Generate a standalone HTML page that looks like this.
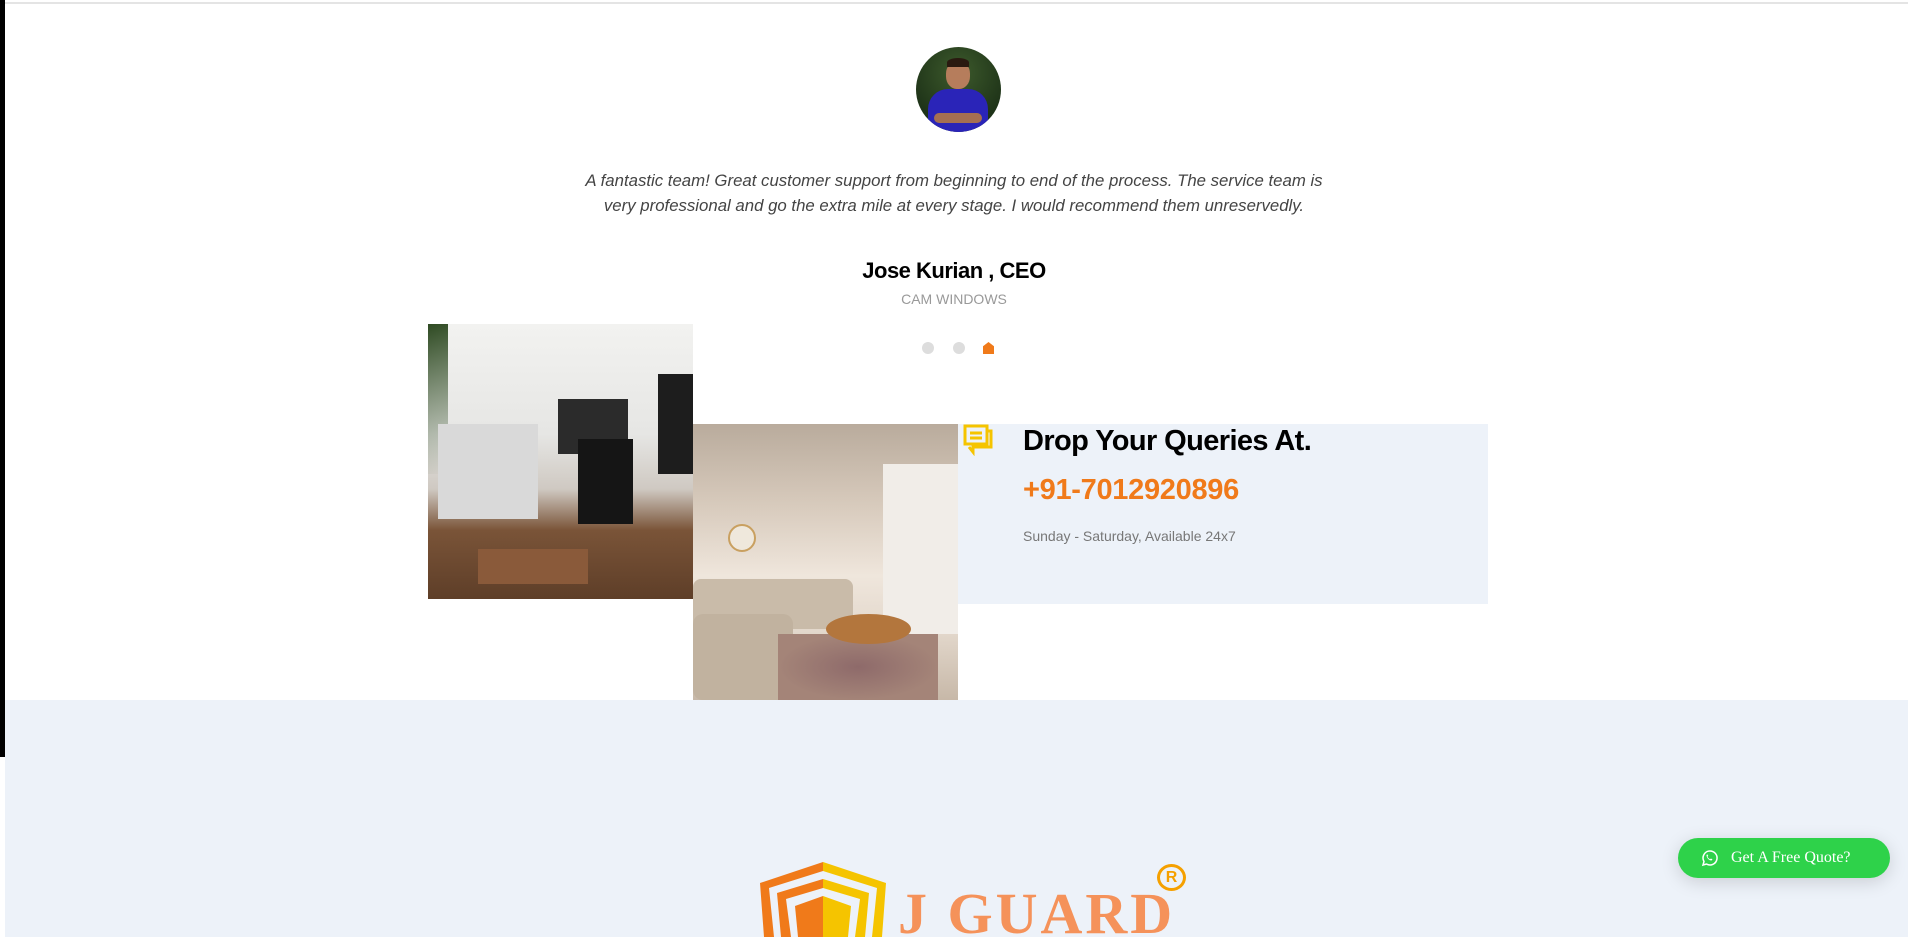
<!DOCTYPE html>
<html><head><meta charset="utf-8"><style>
*{margin:0;padding:0;box-sizing:border-box}
body{width:1908px;height:937px;overflow:hidden;background:#fff;font-family:"Liberation Sans",sans-serif;position:relative}
.a{position:absolute}
</style></head><body>
<div class="a" style="left:0;top:0;width:5px;height:757px;background:#000;z-index:5"></div>
<div class="a" style="left:5px;top:2px;width:1903px;height:2px;background:#e4e4e4"></div>
<!-- avatar -->
<div class="a" style="left:916px;top:47px;width:85px;height:85px;border-radius:50%;overflow:hidden;background:radial-gradient(circle at 50% 30%,#3d5a2c,#1e3318 70%)">
<div class="a" style="left:30px;top:14px;width:24px;height:28px;border-radius:45%;background:#b67d5c"></div>
<div class="a" style="left:31px;top:11px;width:22px;height:9px;border-radius:50% 50% 0 0;background:#2a1a10"></div>
<div class="a" style="left:12px;top:42px;width:60px;height:50px;border-radius:20px 20px 0 0;background:#2a24b8"></div>
<div class="a" style="left:18px;top:66px;width:48px;height:10px;border-radius:5px;background:#a56f52"></div>
</div>
<div class="a" style="left:0;width:1908px;top:168px;text-align:center;font-style:italic;font-size:16.8px;line-height:25px;color:#444">A fantastic team! Great customer support from beginning to end of the process. The service team is<br>very professional and go the extra mile at every stage. I would recommend them unreservedly.</div>
<div class="a" style="left:0;width:1908px;top:258px;text-align:center;font-weight:bold;font-size:22px;color:#000;letter-spacing:-0.5px">Jose Kurian , CEO</div>
<div class="a" style="left:0;width:1908px;top:291px;text-align:center;font-size:14px;color:#999">CAM WINDOWS</div>
<div class="a" style="left:922px;top:342px;width:12px;height:12px;border-radius:50%;background:#ddd"></div>
<div class="a" style="left:953px;top:342px;width:12px;height:12px;border-radius:50%;background:#ddd"></div>
<div class="a" style="left:983px;top:342px;width:11px;height:12px;background:#f07a1a;clip-path:polygon(50% 0,100% 35%,100% 100%,0 100%,0 35%)"></div>
<!-- office image -->
<div class="a" style="left:428px;top:324px;width:265px;height:275px;overflow:hidden;background:linear-gradient(180deg,#f2f2f0 0%,#e6e6e4 40%,#cfc9c2 60%,#7a5438 75%,#5e3e28 100%)">
<div class="a" style="left:0;top:0;width:20px;height:150px;background:linear-gradient(160deg,#2e4a22,transparent)"></div>
<div class="a" style="left:10px;top:100px;width:100px;height:95px;background:#d9d9d9"></div>
<div class="a" style="left:130px;top:75px;width:70px;height:55px;background:#2b2b2b"></div>
<div class="a" style="left:150px;top:115px;width:55px;height:85px;background:#151515"></div>
<div class="a" style="left:230px;top:50px;width:35px;height:100px;background:#1d1d1d"></div>
<div class="a" style="left:50px;top:225px;width:110px;height:35px;background:#8a5a3a"></div>
</div>
<!-- living room image -->
<div class="a" style="left:693px;top:424px;width:265px;height:276px;overflow:hidden;background:linear-gradient(180deg,#b9ab9c 0%,#d8cbbd 30%,#efe6dc 55%,#e3d8cc 75%,#c7b8a8 100%)">
<div class="a" style="left:190px;top:40px;width:75px;height:170px;background:#f1ede8"></div>
<div class="a" style="left:0;top:155px;width:160px;height:50px;border-radius:8px;background:#c9bba9"></div>
<div class="a" style="left:0;top:190px;width:100px;height:86px;border-radius:10px;background:#c1b29f"></div>
<div class="a" style="left:85px;top:210px;width:160px;height:66px;background:radial-gradient(ellipse,#8e6a6a,#a48478 70%)"></div>
<div class="a" style="left:133px;top:190px;width:85px;height:30px;border-radius:50%;background:#b3763d"></div>
<div class="a" style="left:35px;top:100px;width:28px;height:28px;border-radius:50%;border:2px solid #c9a060;background:#efe8dc"></div>
</div>
<!-- panel -->
<div class="a" style="left:958px;top:424px;width:530px;height:180px;background:#edf2f9"></div>
<svg class="a" style="left:963px;top:424px" width="32" height="32" viewBox="0 0 32 32" fill="none" stroke="#f5c400" stroke-width="3"><rect x="2" y="2" width="22" height="18"/><path d="M24 7h4v16H10v5l-4-5"/><path d="M7 9h12M7 14h12"/></svg>
<div class="a" style="left:1023px;top:425px;font-weight:bold;font-size:29px;color:#000;letter-spacing:-0.6px">Drop Your Queries At.</div>
<div class="a" style="left:1023px;top:474px;font-weight:bold;font-size:29px;color:#f07a1a;letter-spacing:-0.3px">+91-7012920896</div>
<div class="a" style="left:1023px;top:528px;font-size:14px;color:#777">Sunday - Saturday, Available 24x7</div>
<!-- bottom section -->
<div class="a" style="left:5px;top:700px;width:1903px;height:237px;background:#edf2f9"></div>
<svg class="a" style="left:760px;top:862px" width="126" height="75" viewBox="0 0 126 75"><path d="M63 0L0 21l4 54h10L9 26 63 9z" fill="#f07a1a"/><path d="M63 0l63 21-4 54h-10l5-49L63 9z" fill="#f5c400"/><path d="M63 17L17 31l4 44h10L26 37l37-11z" fill="#f07a1a"/><path d="M63 17l46 14-4 44h-10l5-38-37-11z" fill="#f5c400"/><path d="M63 34L35 44l3 31h25z" fill="#f07a1a"/><path d="M63 34l28 10-3 31H63z" fill="#f5c400"/></svg>
<div class="a" style="left:898px;top:880px;font-family:'Liberation Serif',serif;font-weight:bold;font-size:58px;color:#f5925a;letter-spacing:3px;white-space:nowrap">J GUARD</div>
<div class="a" style="left:1157px;top:864px;width:29px;height:27px;border:3px solid #f5a000;border-radius:50%;color:#f5a000;font-weight:bold;font-size:16px;text-align:center;line-height:21px">R</div>
<!-- button -->
<div class="a" style="left:1678px;top:838px;width:212px;height:40px;border-radius:20px;background:#2ed24a;box-shadow:0 4px 18px rgba(0,0,0,0.15);color:#fff;font-family:'Liberation Serif',serif;font-size:16px;line-height:40px;padding-left:53px">Get A Free Quote?</div>
<svg class="a" style="left:1700px;top:849px" width="18" height="18" viewBox="0 0 18 18" fill="none" stroke="#fff" stroke-width="1.5"><path d="M3 16l1-3.5A7 7 0 1 1 6.5 15z"/><path d="M6.5 6c0 3 2.5 5.5 5 5.5l1-1-1.5-1-1 .7c-1-.5-2-1.5-2.5-2.5l.7-1-1-1.5z" fill="#fff" stroke="none"/></svg>
</body></html>
